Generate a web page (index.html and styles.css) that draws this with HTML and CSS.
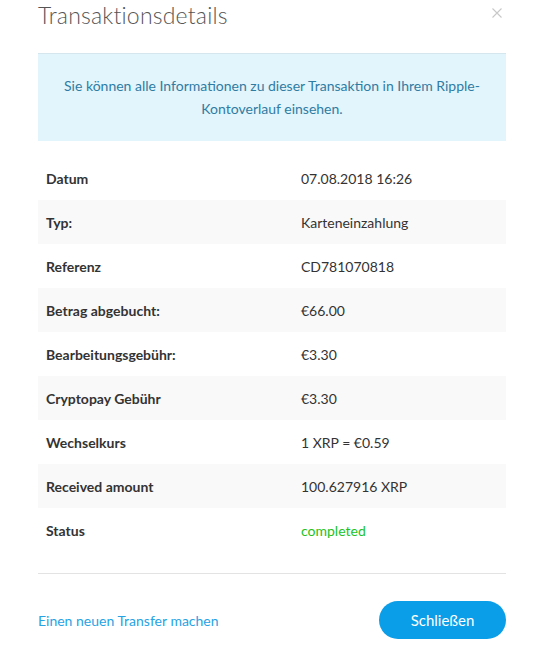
FILE: index.html
```html
<!DOCTYPE html>
<html lang="de">
<head>
<meta charset="utf-8">
<link rel="stylesheet" href="styles.css">
</head>
<body>
<div class="modal">
  <div class="header">
    <h1 class="title">Transaktionsdetails</h1>
    <button class="close" aria-label="Schließen">
      <svg width="10" height="10" viewBox="0 0 10 10"><path d="M0.5 0.5L9.5 9.5M9.5 0.5L0.5 9.5" stroke="#c8c8c8" stroke-width="1.1" fill="none"/></svg>
    </button>
  </div>
  <div class="info">Sie können alle Informationen zu dieser Transaktion in Ihrem Ripple-Kontoverlauf einsehen.</div>
  <div class="table">
    <div class="row"><div class="label">Datum</div><div class="value">07.08.2018 16:26</div></div>
    <div class="row"><div class="label">Typ:</div><div class="value">Karteneinzahlung</div></div>
    <div class="row"><div class="label">Referenz</div><div class="value">CD781070818</div></div>
    <div class="row"><div class="label">Betrag abgebucht:</div><div class="value">€66.00</div></div>
    <div class="row"><div class="label">Bearbeitungsgebühr:</div><div class="value">€3.30</div></div>
    <div class="row"><div class="label">Cryptopay Gebühr</div><div class="value">€3.30</div></div>
    <div class="row"><div class="label">Wechselkurs</div><div class="value">1 XRP = €0.59</div></div>
    <div class="row"><div class="label">Received amount</div><div class="value">100.627916 XRP</div></div>
    <div class="row"><div class="label">Status</div><div class="value status">completed</div></div>
  </div>
  <div class="footer">
    <a class="link" href="#">Einen neuen Transfer machen</a>
    <button class="btn">Schließen</button>
  </div>
</div>
</body>
</html>
```
FILE: styles.css
```css
* { box-sizing: border-box; }
html, body { margin: 0; padding: 0; background: #fff; }
body {
  font-family: "Lato", "Open Sans", sans-serif;
  color: #333;
  font-size: 14px;
}
.modal {
  width: 468px;
  margin-left: 38px;
}
.header {
  display: flex;
  justify-content: space-between;
  align-items: flex-start;
  height: 53px;
}
.title {
  margin: 0;
  font-weight: 300;
  font-size: 23px;
  line-height: 30px;
  color: #555;
  letter-spacing: 0.2px;
}
.close {
  border: 0;
  background: none;
  padding: 0;
  margin: 8px 4px 0 0;
  width: 10px;
  height: 10px;
  display: flex;
}
.info {
  border-top: 1px solid #d6e6ee;
  background: #e2f4fc;
  color: #2f7ca3;
  text-align: center;
  font-size: 14px;
  line-height: 23px;
  padding: 20px 20px 23px;
  height: 88px;
}
.table {
  margin-top: 15px;
  padding-bottom: 21px;
  border-bottom: 1px solid #e3e3e3;
}
.row {
  display: grid;
  grid-template-columns: 255px 1fr;
  height: 44px;
  align-items: center;
}
.row:nth-child(even) { background: #f9f9f9; }
.label {
  padding-left: 8px;
  font-weight: 700;
  color: #333;
}
.value {
  padding-left: 8px;
  color: #333;
}
.status { color: #22c322; }
.footer {
  display: flex;
  justify-content: space-between;
  align-items: center;
  margin-top: 27px;
}
.link {
  color: #27a3e4;
  text-decoration: none;
  font-size: 14px;
}
.btn {
  width: 127px;
  height: 38px;
  border: 0;
  border-radius: 19px;
  background: #0a9de8;
  color: #fff;
  font-family: inherit;
  font-size: 15px;
}
```
